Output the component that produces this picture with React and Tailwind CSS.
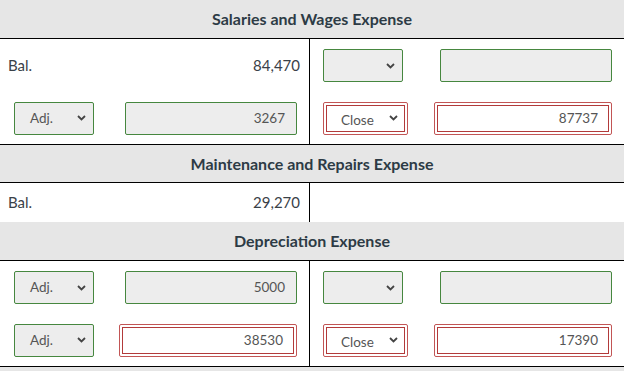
import React from "react";

const font = { fontFamily: "Lato, 'Noto Sans', sans-serif" };

function Chevron() {
  return (
    <svg width="9" height="6" viewBox="0 0 9 6" className="shrink-0">
      <path d="M1 1l3.5 3.5L8 1" fill="none" stroke="#444" strokeWidth="1.8" />
    </svg>
  );
}

// Select that was answered correctly or left untouched (green frame, grey fill)
function GreenSelect({ value }) {
  return (
    <div className="flex h-[33px] w-[80px] items-center justify-between rounded-[2px] border border-[#46873f] bg-[#ededed] pl-[15px] pr-[7px] text-[13.5px] text-[#555]">
      <span>{value}</span>
      <Chevron />
    </div>
  );
}

function GreenInput({ value }) {
  return (
    <div className="flex h-[33px] w-[172px] items-center justify-end rounded-[2px] border border-[#46873f] bg-[#ededed] pr-[11px] text-[13.5px] text-[#555]">
      {value}
    </div>
  );
}

// Incorrect answers get a doubled red frame
function RedSelect({ value }) {
  return (
    <div className="h-[33px] w-[85px] rounded-[2px] border border-[#c25555] p-[2px]">
      <div className="flex h-full items-center justify-between border-[1.5px] border-[#b23a3a] bg-white pl-[14px] pr-[6px] text-[13.5px] text-[#555]">
        <span className="mt-[5px]">{value}</span>
        <Chevron />
      </div>
    </div>
  );
}

function RedInput({ value }) {
  return (
    <div className="h-[33px] w-[178px] rounded-[2px] border border-[#c25555] p-[2px]">
      <div className="flex h-full items-center justify-end border-[1.5px] border-[#b23a3a] bg-white pr-[10px] text-[13.5px] text-[#555]">
        {value}
      </div>
    </div>
  );
}

function Header({ title, h }) {
  return (
    <div
      className={`flex items-center justify-center border-b border-black bg-[#e6e6e6] text-[16px] font-bold text-[#2d3b45] ${h}`}
    >
      {title}
    </div>
  );
}

function Row({ left, right, last }) {
  return (
    <div className={`flex h-[53px] ${last ? "border-b border-black" : ""}`}>
      <div className="flex w-[310px] items-center justify-between border-r border-black pl-[14px] pr-[12px]">
        {left}
      </div>
      <div className="flex flex-1 items-center justify-between pl-[13px] pr-[12px]">
        {right}
      </div>
    </div>
  );
}

function BalCell({ amount }) {
  return (
    <div className="flex w-[310px] items-center justify-between border-r border-black pl-[8px] pr-[9px] text-[15px] text-[#3a4148]">
      <span>Bal.</span>
      <span>{amount}</span>
    </div>
  );
}

export default function App() {
  return (
    <div className="h-[371px] w-[624px] overflow-hidden bg-white" style={font}>
      <Header title="Salaries and Wages Expense" h="h-[39px]" />
      <div className="flex h-[53px]">
        <BalCell amount="84,470" />
        <div className="flex flex-1 items-center justify-between pl-[13px] pr-[12px]">
          <GreenSelect value="" />
          <GreenInput value="" />
        </div>
      </div>
      <Row
        last
        left={
          <>
            <GreenSelect value="Adj." />
            <GreenInput value="3267" />
          </>
        }
        right={
          <>
            <RedSelect value="Close" />
            <RedInput value="87737" />
          </>
        }
      />
      <Header title="Maintenance and Repairs Expense" h="h-[38px]" />
      <div className="flex h-[39px]">
        <BalCell amount="29,270" />
        <div className="flex-1" />
      </div>
      <Header title="Depreciation Expense" h="h-[39px]" />
      <Row
        left={
          <>
            <GreenSelect value="Adj." />
            <GreenInput value="5000" />
          </>
        }
        right={
          <>
            <GreenSelect value="" />
            <GreenInput value="" />
          </>
        }
      />
      <Row
        last
        left={
          <>
            <GreenSelect value="Adj." />
            <RedInput value="38530" />
          </>
        }
        right={
          <>
            <RedSelect value="Close" />
            <RedInput value="17390" />
          </>
        }
      />
      <div className="h-[10px] bg-[#e6e6e6]" />
    </div>
  );
}
